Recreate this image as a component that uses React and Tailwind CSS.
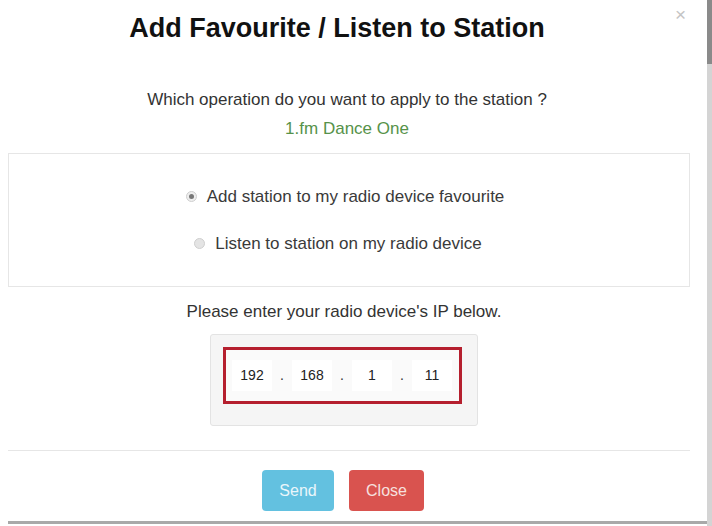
export default function App() {
  const octets = ["192", "168", "1", "11"];

  return (
    <div className="relative w-[712px] h-[526px] overflow-hidden bg-white font-['Liberation_Sans',Arial,sans-serif] text-[#333]">
      {/* window edge / scrollbar */}
      <div className="absolute right-0 top-0 h-full w-[5px] bg-[#d4d4d4]">
        <div className="h-[64px] w-full bg-[#8a8a8a]" />
      </div>

      <div className="flex flex-col pl-[8px] pr-[22px]">
        {/* header */}
        <div className="relative flex h-[56px] items-center justify-center pr-[24px]">
          <h1 className="text-[27px] font-bold text-[#111]">Add Favourite / Listen to Station</h1>
          <span className="absolute right-[4px] top-[1px] text-[19px] text-[#c4c4c4]">×</span>
        </div>

        <div className="flex flex-col items-center pt-[34px] pr-[4px]">
          <p className="text-[17px] leading-[20px]">Which operation do you want to apply to the station ?</p>
          <p className="mt-[9px] text-[17px] leading-[20px] text-[#56924a]">1.fm Dance One</p>
        </div>

        {/* radio panel */}
        <div className="mt-[14px] flex h-[134px] flex-col items-center justify-center gap-[27px] border border-[#e6e6e6] text-[#3a3a3a]">
          <label className="flex items-center gap-[10px] text-[17px] leading-[20px] pr-[8px]">
            <span className="flex h-[11px] w-[11px] items-center justify-center rounded-full border border-[#cfcfcf] bg-[#eee]">
              <span className="h-[5px] w-[5px] rounded-full bg-[#777]" />
            </span>
            Add station to my radio device favourite
          </label>
          <label className="flex items-center gap-[10px] text-[17px] leading-[20px] pr-[22px]">
            <span className="h-[11px] w-[11px] rounded-full border border-[#cfcfcf] bg-[#e4e4e4]" />
            Listen to station on my radio device
          </label>
        </div>

        {/* ip entry */}
        <div className="flex flex-col items-center pr-[10px]">
          <p className="mt-[15px] text-[17px] leading-[20px]">Please enter your radio device's IP below.</p>
          <div className="mt-[12px] flex h-[92px] w-[268px] justify-center rounded-[3px] border border-[#e3e3e3] bg-[#f5f5f5] pt-[12px] pr-[4px]">
            <div className="flex h-[57px] w-[239px] items-center justify-center gap-[5px] border-[3px] border-[#b51f2e] bg-[#fafafa]">
              {octets.map((o, i) => (
                <div key={i} className="flex items-center gap-[5px]">
                  <span className="flex h-[31px] w-[40px] items-center justify-center bg-white text-[14px] text-[#222]">{o}</span>
                  {i < 3 && <span className="w-[10px] text-center text-[14px]">.</span>}
                </div>
              ))}
            </div>
          </div>
        </div>

        {/* footer */}
        <div className="mt-[24px] flex justify-center gap-[15px] border-t border-[#e6e6e6] pt-[19px] pr-[12px]">
          <button className="h-[41px] w-[72px] rounded-[4px] bg-[#63c1e0] text-[16px] text-[#eaf6fb]">Send</button>
          <button className="h-[41px] w-[75px] rounded-[4px] bg-[#d9534f] text-[16px] text-[#f6e0df]">Close</button>
        </div>
      </div>

      <div className="absolute bottom-[2px] left-[8px] right-[5px] h-[3px] bg-[#a9a9a9]" />
    </div>
  );
}
